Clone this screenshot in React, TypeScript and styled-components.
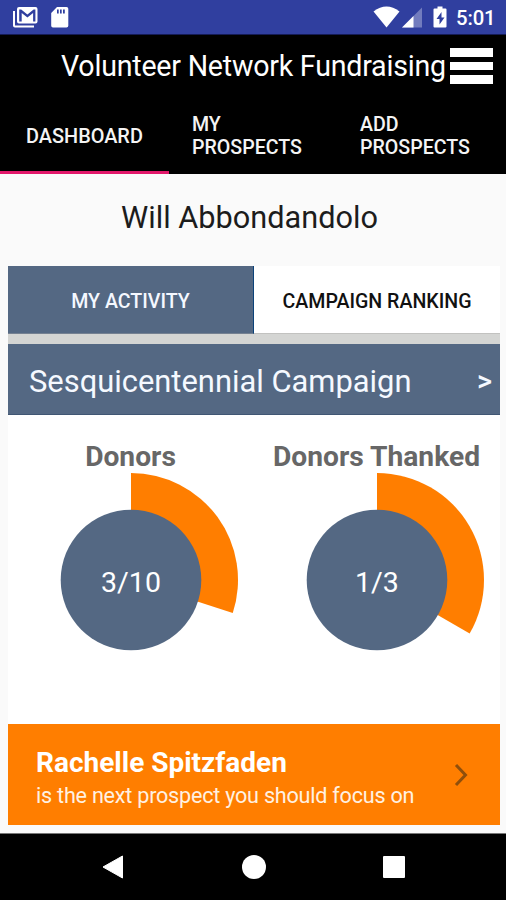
import React from "react";
import styled, { createGlobalStyle } from "styled-components";

const slate = "#546883";
const orange = "#ff7e00";

const GlobalStyle = createGlobalStyle`
  * { box-sizing: border-box; }
  body { margin: 0; background: #fafafa; font-family: Roboto, "Liberation Sans", sans-serif; }
  button { border: 0; padding: 0; margin: 0; background: none; font: inherit; color: inherit; }
`;

const Screen = styled.div`
  width: 506px;
  height: 900px;
  display: flex;
  flex-direction: column;
  overflow: hidden;
  background: #fafafa;
`;

const StatusBar = styled.div`
  height: 35px;
  flex: none;
  display: flex;
  justify-content: space-between;
  background: #303f9f;
  border-bottom: 1px solid #141b55;
  color: #fff;
`;

const StatusIcons = styled.svg`
  display: block;
`;

const StatusRight = styled.div`
  display: flex;
`;

const Clock = styled.span`
  width: 50px;
  font-size: 20.3px;
  font-weight: 500;
  line-height: 36px;
  letter-spacing: -0.1px;
  white-space: nowrap;
`;

const AppBar = styled.header`
  height: 63px;
  flex: none;
  display: flex;
  justify-content: flex-end;
  padding-right: 13px;
  background: #000;
  color: #fff;
`;

const Title = styled.h1`
  width: 389px;
  margin: 0;
  font-size: 28.6px;
  font-weight: 400;
  line-height: 63px;
  letter-spacing: -0.22px;
  white-space: nowrap;
`;

const MenuButton = styled.button`
  width: 43px;
  display: flex;
  flex-direction: column;
  gap: 5px;
  padding-top: 13px;
`;

const MenuBar = styled.span`
  height: 8.5px;
  background: #fff;
`;

const Tabs = styled.nav`
  height: 76px;
  flex: none;
  display: grid;
  grid-template-columns: 169px 168px 169px;
  background: #000;
  color: #f4f4f4;
`;

const Tab = styled.button<{ $active?: boolean }>`
  display: flex;
  align-items: center;
  text-align: left;
  padding-left: ${(p) => (p.$active ? 26 : 23)}px;
  padding-top: 3px;
  border-bottom: 3px solid ${(p) => (p.$active ? "#e2186a" : "#000")};
  font-size: ${(p) => (p.$active ? 19.9 : 19.6)}px;
  font-weight: 500;
  line-height: 23px;
  white-space: pre-line;
`;

const UserName = styled.h2`
  height: 92px;
  flex: none;
  margin: 0;
  padding-right: 7px;
  text-align: center;
  font-size: 30.7px;
  font-weight: 400;
  line-height: 88px;
  color: #1c1c1c;
  white-space: nowrap;
`;

const Card = styled.main`
  width: 492px;
  height: 559px;
  margin-left: 8px;
  flex: none;
  display: flex;
  flex-direction: column;
  background: #fff;
`;

const Segments = styled.div`
  height: 78px;
  flex: none;
  display: grid;
  grid-template-columns: 1fr 1fr;
  border-bottom: 10px solid #d4d5d3;
`;

const Segment = styled.button<{ $active?: boolean }>`
  background: ${(p) => (p.$active ? slate : "#fff")};
  color: ${(p) => (p.$active ? "#f5f8ff" : "#111")};
  border-right: ${(p) => (p.$active ? "1px solid #0c4379" : "0")};
  border-bottom: 1px solid ${(p) => (p.$active ? "#758191" : "#c2c2c0")};
  font-size: 19.6px;
  font-weight: 500;
  line-height: 24px;
  padding-top: 4px;
  white-space: nowrap;
`;

const CampaignBar = styled.div`
  height: 71px;
  flex: none;
  display: flex;
  justify-content: space-between;
  padding: 0 8px 0 21px;
  background: ${slate};
  border-bottom: 1px solid #405673;
  color: #f5f9ff;
  line-height: 75px;
  white-space: nowrap;
`;

const CampaignName = styled.span`
  font-size: 30.9px;
`;

const CampaignArrow = styled.span`
  font-size: 29px;
  font-weight: 500;
`;

const Charts = styled.section`
  height: 309px;
  flex: none;
  display: grid;
  grid-template-columns: 1fr 1fr;
`;

const Chart = styled.div`
  display: flex;
  flex-direction: column;
  align-items: center;
  padding: 26px 1px 0 0;
`;

const ChartTitle = styled.h3`
  margin: 0;
  font-size: 28.2px;
  font-weight: 700;
  line-height: 32px;
  color: #676767;
  white-space: nowrap;
`;

const Gauge = styled.svg`
  display: block;
`;

const GaugeText = styled.text`
  font-size: 28.5px;
  fill: #fff;
  text-anchor: middle;
`;

const Prospect = styled.button`
  height: 101px;
  flex: none;
  display: flex;
  justify-content: space-between;
  align-items: center;
  padding: 0 32px 0 28px;
  background: ${orange};
  color: #fff;
  text-align: left;
  white-space: nowrap;
`;

const ProspectText = styled.span`
  display: flex;
  flex-direction: column;
  padding-top: 7px;
`;

const ProspectName = styled.strong`
  font-size: 28px;
  font-weight: 700;
  line-height: 34px;
`;

const ProspectNote = styled.span`
  font-size: 21.6px;
  letter-spacing: -0.23px;
  line-height: 31px;
  color: #fff1e2;
`;

const NavBar = styled.footer`
  height: 67px;
  flex: none;
  margin-top: auto;
  border-top: 1px solid #777;
  display: flex;
  align-items: center;
  justify-content: space-between;
  padding: 0 101px 0 102px;
  background: #000;
`;

function Donut({ value, total, label }: { value: number; total: number; label: string }) {
  const a = (value / total) * 2 * Math.PI;
  const x = 108 + 107 * Math.sin(a);
  const y = 107 - 107 * Math.cos(a);
  return (
    <Gauge width="216" height="214" viewBox="0 0 216 214">
      <path d={`M108 107V0A107 107 0 0 1 ${x} ${y}Z`} fill={orange} />
      <circle cx="108" cy="107" r="70.3" fill={slate} />
      <GaugeText x="108" y="119">{label}</GaugeText>
    </Gauge>
  );
}

export default function App() {
  return (
    <>
      <GlobalStyle />
      <Screen>
        <StatusBar>
          <StatusIcons width="80" height="34" viewBox="0 0 80 34" fill="#fff">
            <path d="M13 11h2v14.5h19v2H15a2 2 0 0 1-2-2Z" />
            <path
              fillRule="evenodd"
              d="M19 7h16.500a2 2 0 0 1 2 2v12.500a2 2 0 0 1-2 2H19a2 2 0 0 1-2-2V9a2 2 0 0 1 2-2ZM19.200 9.500v12h2.500v-8.500l5.700 4.500 5.700-4.500v8.500h2.300v-12h-1.800l-6.200 5-6.200-5Z"
            />
            <path
              fillRule="evenodd"
              d="M57 7h9.500a1.800 1.800 0 0 1 1.800 1.800v17a1.800 1.800 0 0 1-1.800 1.800H53a1.800 1.800 0 0 1-1.800-1.800V13ZM57 9.500v4h1.700v-4ZM60 9.500v4h1.700v-4ZM63 9.500v4h1.800v-4Z"
            />
          </StatusIcons>
          <StatusRight>
            <StatusIcons width="84" height="34" viewBox="372 0 84 34" fill="#fff">
              <path d="M373.500 11.500Q386.500 1.500 399.500 11.500L386.500 27.500Z" />
              <path d="M422 7.500V27.500H402Z" opacity=".32" />
              <path d="M413.500 16V27.500H402Z" />
              <path
                fillRule="evenodd"
                d="M437.500 6.500h5v2h3a1 1 0 0 1 1 1v17a1 1 0 0 1-1 1h-11a1 1 0 0 1-1-1v-17a1 1 0 0 1 1-1h3ZM441.500 12l-5 7h3v5.500l5-7h-3Z"
              />
            </StatusIcons>
            <Clock>5:01</Clock>
          </StatusRight>
        </StatusBar>
        <AppBar>
          <Title>Volunteer Network Fundraising</Title>
          <MenuButton aria-label="Menu">
            <MenuBar />
            <MenuBar />
            <MenuBar />
          </MenuButton>
        </AppBar>
        <Tabs>
          <Tab $active>DASHBOARD</Tab>
          <Tab>{"MY\nPROSPECTS"}</Tab>
          <Tab>{"ADD\nPROSPECTS"}</Tab>
        </Tabs>
        <UserName>Will Abbondandolo</UserName>
        <Card>
          <Segments>
            <Segment $active>MY ACTIVITY</Segment>
            <Segment>CAMPAIGN RANKING</Segment>
          </Segments>
          <CampaignBar>
            <CampaignName>Sesquicentennial Campaign</CampaignName>
            <CampaignArrow>&gt;</CampaignArrow>
          </CampaignBar>
          <Charts>
            <Chart>
              <ChartTitle>Donors</ChartTitle>
              <Donut value={3} total={10} label="3/10" />
            </Chart>
            <Chart>
              <ChartTitle>Donors Thanked</ChartTitle>
              <Donut value={1} total={3} label="1/3" />
            </Chart>
          </Charts>
          <Prospect>
            <ProspectText>
              <ProspectName>Rachelle Spitzfaden</ProspectName>
              <ProspectNote>is the next prospect you should focus on</ProspectNote>
            </ProspectText>
            <svg width="14" height="24" viewBox="0 0 14 24" fill="none" stroke="#8f4f0c" strokeWidth="3">
              <path d="M2 2l9.500 10L2 22" />
            </svg>
          </Prospect>
        </Card>
        <NavBar>
          <svg width="22" height="24" viewBox="0 0 22 24" fill="#fff">
            <path d="M20.500 1v22L1 12Z" stroke="#fff" strokeWidth="1" strokeLinejoin="round" />
          </svg>
          <svg width="24" height="24" viewBox="0 0 24 24" fill="#fff">
            <circle cx="12" cy="12" r="12" />
          </svg>
          <svg width="22" height="22" viewBox="0 0 22 22" fill="#fff">
            <rect width="22" height="22" rx="1" />
          </svg>
        </NavBar>
      </Screen>
    </>
  );
}
